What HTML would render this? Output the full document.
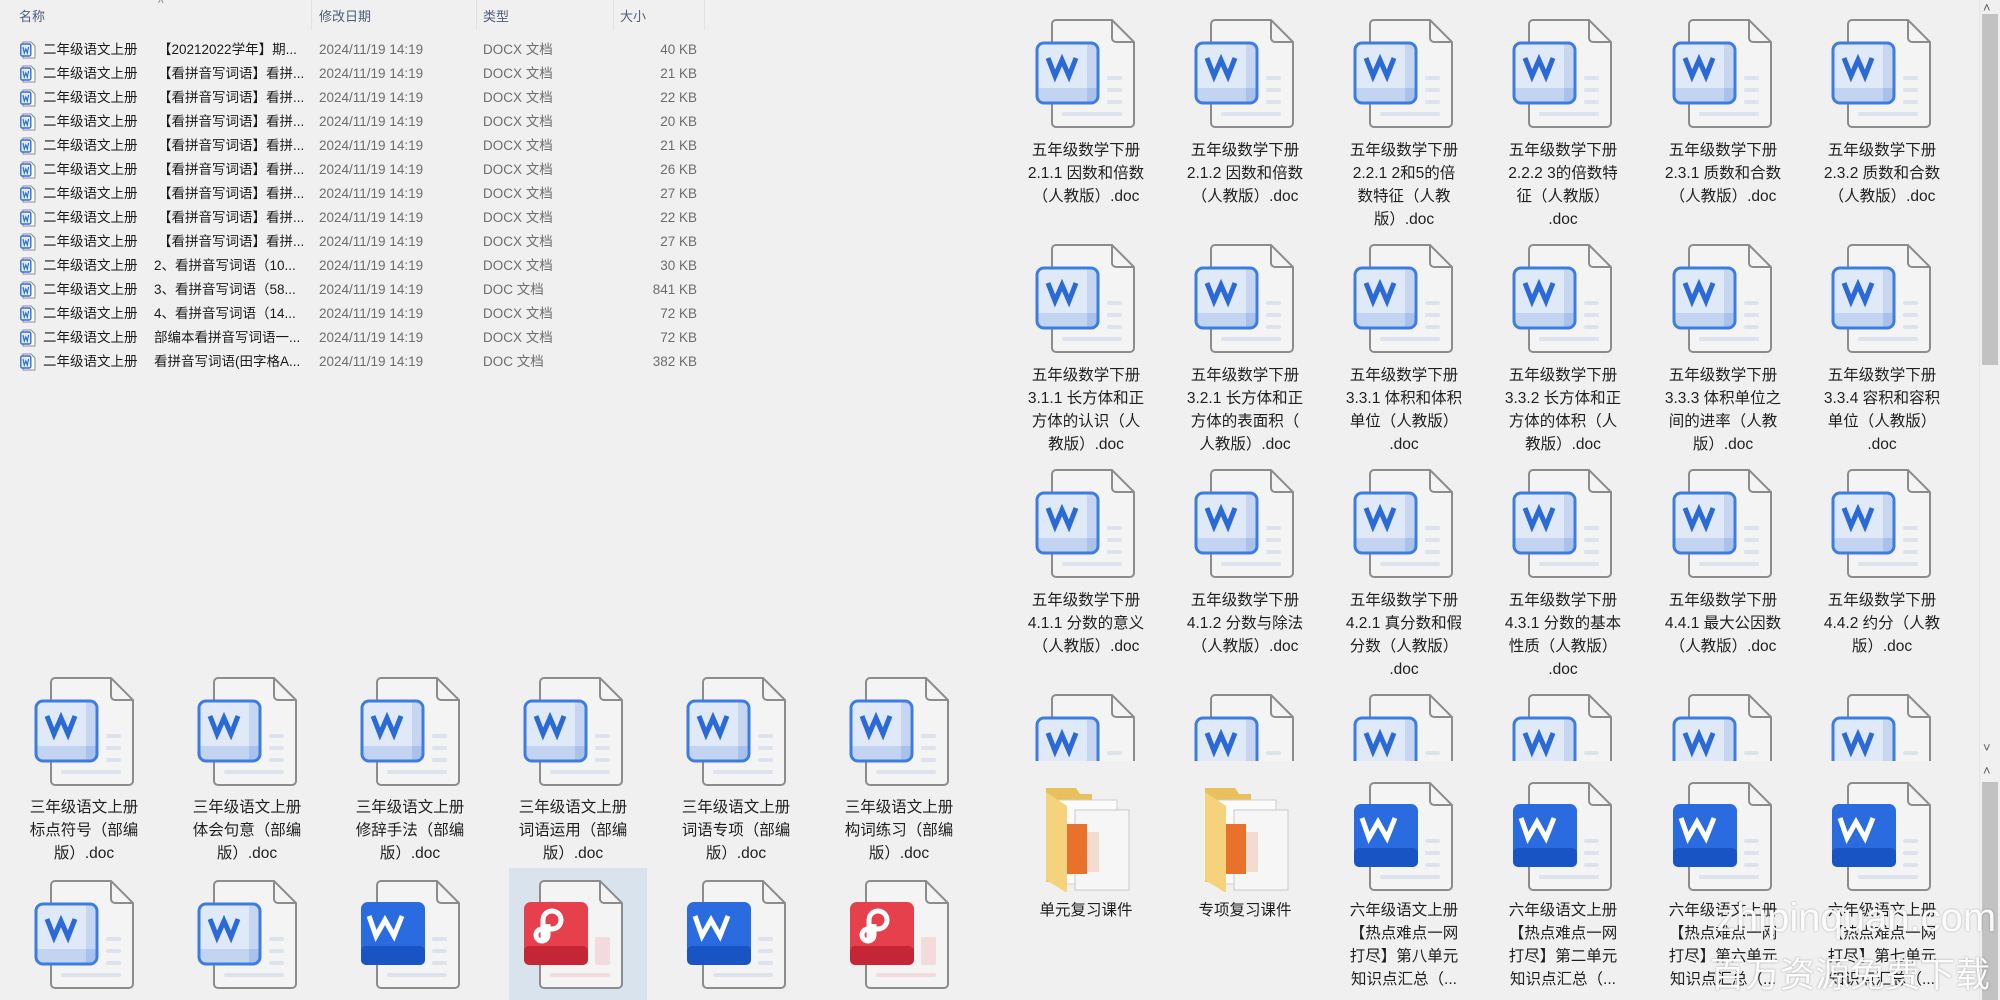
<!DOCTYPE html>
<html><head><meta charset="utf-8">
<style>
*{margin:0;padding:0;box-sizing:border-box}
body{width:2000px;height:1000px;overflow:hidden;background:#f0f0f0;position:relative;font-family:"Liberation Sans","Noto Sans CJK SC",sans-serif;color:#1a1a1a}
.a{position:absolute}
.hd{position:absolute;top:6px;font-size:13px;color:#4d6079}
.sep{position:absolute;top:0;width:1px;height:30px;background:#e2e2e2}
.row{position:absolute;left:0;width:720px;height:24px;font-size:13.5px;line-height:24px;white-space:nowrap}
.row span{position:absolute}
.n1{left:43px}.n2{left:154px}.dt{left:319px;color:#6d6d6d}.ty{left:483px;color:#6d6d6d}.sz{right:23px;color:#6d6d6d}
.li{position:absolute;left:20px;top:3px}
.ic{position:absolute;width:120px;height:112px;overflow:hidden}
.lbl{position:absolute;width:160px;text-align:center;font-size:15.5px;line-height:23px;color:#1f1f1f;white-space:nowrap}
</style></head><body>
<svg width="0" height="0" style="position:absolute">
<defs>
<g id="pg">
<path d="M1 5a4 4 0 0 1 4-4H61L83 23V104a4 4 0 0 1-4 4H5a4 4 0 0 1-4-4Z" fill="#f4f4f4" stroke="#8c8c8c" stroke-width="2"/>
<path d="M61 1V19a4 4 0 0 0 4 4H83" fill="none" stroke="#8c8c8c" stroke-width="2"/>
</g>
<symbol id="wo" viewBox="-20 -2 120 112">
<use href="#pg"/>
<rect x="56" y="57" width="15" height="4" rx="2" fill="#dde3ec"/>
<rect x="56" y="69" width="15" height="4" rx="2" fill="#dde3ec"/>
<rect x="56" y="81" width="15" height="4" rx="2" fill="#dde3ec"/>
<rect x="11" y="93" width="60" height="4" rx="2" fill="#dde3ec"/>
<rect x="-14" y="24" width="61" height="60" rx="7" fill="#e0e9f8"/>
<rect x="36" y="25" width="10" height="58" fill="#c6d6f1"/>
<rect x="-13" y="69" width="59" height="14" fill="#c3d4f0"/>
<rect x="36" y="69" width="10" height="14" fill="#a9c2ec"/>
<rect x="-14" y="24" width="61" height="60" rx="7" fill="none" stroke="#3d7ce0" stroke-width="3"/>
<path d="M-3 39L4 57L11 41L18 57L25 39" fill="none" stroke="#2b6ad6" stroke-width="5" stroke-linejoin="miter"/>
</symbol>
<symbol id="ws" viewBox="-20 -2 120 112">
<use href="#pg"/>
<rect x="56" y="57" width="15" height="4" rx="2" fill="#dde3ec"/>
<rect x="56" y="69" width="15" height="4" rx="2" fill="#dde3ec"/>
<rect x="56" y="81" width="15" height="4" rx="2" fill="#dde3ec"/>
<rect x="11" y="93" width="60" height="4" rx="2" fill="#dde3ec"/>
<rect x="-15" y="22" width="64" height="63" rx="7" fill="#2a6be0"/>
<rect x="-15" y="66" width="64" height="19" rx="5" fill="#1854c4"/>
<path d="M-7 36L0 56L9 40L18 56L26 36" fill="none" stroke="#fff" stroke-width="5"/>
</symbol>
<symbol id="pd" viewBox="-20 -2 120 112">
<use href="#pg"/>
<rect x="56" y="57" width="15" height="26" rx="2" fill="#f2dadd"/>
<rect x="56" y="81" width="15" height="4" rx="2" fill="#f2dadd"/>
<rect x="11" y="93" width="60" height="4" rx="2" fill="#f2dadd"/>
<rect x="-15" y="22" width="64" height="63" rx="7" fill="#e5404c"/>
<rect x="-15" y="66" width="64" height="19" rx="5" fill="#c42635"/>
<path d="M4 60V40a9 9 0 1 1 9 9H3a6 6 0 1 0 6 6V44" fill="none" stroke="#fff" stroke-width="5"/>
</symbol>
<symbol id="fd" viewBox="-20 -2 120 112">
<path d="M-5 6h30l4 6h12v88h-46z" fill="#e8c15c"/>
<rect x="8" y="18" width="58" height="84" fill="#fbfbfb" stroke="#cfcfcf"/>
<rect x="24" y="28" width="54" height="80" fill="#f6f6f6" stroke="#c8c8c8"/>
<rect x="14" y="42" width="22" height="50" fill="#e8712b"/>
<rect x="36" y="50" width="12" height="40" fill="#f1dccf"/>
<path d="M-5 10L16 24V111L-5 98Z" fill="#f4d37c"/>
</symbol>
<symbol id="sm" viewBox="0 0 16 18">
<path d="M3 1h8l4 4v12H3z" fill="#fff" stroke="#8a8a8a"/>
<rect x="0.8" y="3" width="10" height="12" rx="1.5" fill="#e4ecfa" stroke="#2f6fdb" stroke-width="1.4"/>
<path d="M3 6l1.3 6 1.5-4 1.5 4 1.3-6" fill="none" stroke="#2f6fdb" stroke-width="1.2"/>
</symbol>
</defs></svg>

<div class="a" style="left:158px;top:-4px;font-size:12px;color:#888">^</div>
<div class="hd" style="left:19px">名称</div>
<div class="hd" style="left:319px">修改日期</div>
<div class="hd" style="left:483px">类型</div>
<div class="hd" style="left:620px">大小</div>
<div class="sep" style="left:311px"></div><div class="sep" style="left:476px"></div><div class="sep" style="left:613px"></div><div class="sep" style="left:704px"></div>

<div class="row" style="top:38px"><svg class="li" width="16" height="18"><use href="#sm"/></svg><span class="n1">二年级语文上册</span><span class="n2" style="left:158px">【20212022学年】期...</span><span class="dt">2024/11/19 14:19</span><span class="ty">DOCX 文档</span><span class="sz">40 KB</span></div>
<div class="row" style="top:62px"><svg class="li" width="16" height="18"><use href="#sm"/></svg><span class="n1">二年级语文上册</span><span class="n2" style="left:158px">【看拼音写词语】看拼...</span><span class="dt">2024/11/19 14:19</span><span class="ty">DOCX 文档</span><span class="sz">21 KB</span></div>
<div class="row" style="top:86px"><svg class="li" width="16" height="18"><use href="#sm"/></svg><span class="n1">二年级语文上册</span><span class="n2" style="left:158px">【看拼音写词语】看拼...</span><span class="dt">2024/11/19 14:19</span><span class="ty">DOCX 文档</span><span class="sz">22 KB</span></div>
<div class="row" style="top:110px"><svg class="li" width="16" height="18"><use href="#sm"/></svg><span class="n1">二年级语文上册</span><span class="n2" style="left:158px">【看拼音写词语】看拼...</span><span class="dt">2024/11/19 14:19</span><span class="ty">DOCX 文档</span><span class="sz">20 KB</span></div>
<div class="row" style="top:134px"><svg class="li" width="16" height="18"><use href="#sm"/></svg><span class="n1">二年级语文上册</span><span class="n2" style="left:158px">【看拼音写词语】看拼...</span><span class="dt">2024/11/19 14:19</span><span class="ty">DOCX 文档</span><span class="sz">21 KB</span></div>
<div class="row" style="top:158px"><svg class="li" width="16" height="18"><use href="#sm"/></svg><span class="n1">二年级语文上册</span><span class="n2" style="left:158px">【看拼音写词语】看拼...</span><span class="dt">2024/11/19 14:19</span><span class="ty">DOCX 文档</span><span class="sz">26 KB</span></div>
<div class="row" style="top:182px"><svg class="li" width="16" height="18"><use href="#sm"/></svg><span class="n1">二年级语文上册</span><span class="n2" style="left:158px">【看拼音写词语】看拼...</span><span class="dt">2024/11/19 14:19</span><span class="ty">DOCX 文档</span><span class="sz">27 KB</span></div>
<div class="row" style="top:206px"><svg class="li" width="16" height="18"><use href="#sm"/></svg><span class="n1">二年级语文上册</span><span class="n2" style="left:158px">【看拼音写词语】看拼...</span><span class="dt">2024/11/19 14:19</span><span class="ty">DOCX 文档</span><span class="sz">22 KB</span></div>
<div class="row" style="top:230px"><svg class="li" width="16" height="18"><use href="#sm"/></svg><span class="n1">二年级语文上册</span><span class="n2" style="left:158px">【看拼音写词语】看拼...</span><span class="dt">2024/11/19 14:19</span><span class="ty">DOCX 文档</span><span class="sz">27 KB</span></div>
<div class="row" style="top:254px"><svg class="li" width="16" height="18"><use href="#sm"/></svg><span class="n1">二年级语文上册</span><span class="n2">2、看拼音写词语（10...</span><span class="dt">2024/11/19 14:19</span><span class="ty">DOCX 文档</span><span class="sz">30 KB</span></div>
<div class="row" style="top:278px"><svg class="li" width="16" height="18"><use href="#sm"/></svg><span class="n1">二年级语文上册</span><span class="n2">3、看拼音写词语（58...</span><span class="dt">2024/11/19 14:19</span><span class="ty">DOC 文档</span><span class="sz">841 KB</span></div>
<div class="row" style="top:302px"><svg class="li" width="16" height="18"><use href="#sm"/></svg><span class="n1">二年级语文上册</span><span class="n2">4、看拼音写词语（14...</span><span class="dt">2024/11/19 14:19</span><span class="ty">DOCX 文档</span><span class="sz">72 KB</span></div>
<div class="row" style="top:326px"><svg class="li" width="16" height="18"><use href="#sm"/></svg><span class="n1">二年级语文上册</span><span class="n2">部编本看拼音写词语一...</span><span class="dt">2024/11/19 14:19</span><span class="ty">DOCX 文档</span><span class="sz">72 KB</span></div>
<div class="row" style="top:350px"><svg class="li" width="16" height="18"><use href="#sm"/></svg><span class="n1">二年级语文上册</span><span class="n2">看拼音写词语(田字格A...</span><span class="dt">2024/11/19 14:19</span><span class="ty">DOC 文档</span><span class="sz">382 KB</span></div>

<div class="a" style="left:509px;top:868px;width:138px;height:132px;background:#d8e3ee"></div>
<svg class="ic" style="left:30px;top:675px"><use href="#wo"/></svg>
<svg class="ic" style="left:193px;top:675px"><use href="#wo"/></svg>
<svg class="ic" style="left:356px;top:675px"><use href="#wo"/></svg>
<svg class="ic" style="left:519px;top:675px"><use href="#wo"/></svg>
<svg class="ic" style="left:682px;top:675px"><use href="#wo"/></svg>
<svg class="ic" style="left:845px;top:675px"><use href="#wo"/></svg>
<div class="lbl" style="left:4px;top:796px">三年级语文上册<br>标点符号（部编<br>版）.doc</div>
<div class="lbl" style="left:167px;top:796px">三年级语文上册<br>体会句意（部编<br>版）.doc</div>
<div class="lbl" style="left:330px;top:796px">三年级语文上册<br>修辞手法（部编<br>版）.doc</div>
<div class="lbl" style="left:493px;top:796px">三年级语文上册<br>词语运用（部编<br>版）.doc</div>
<div class="lbl" style="left:656px;top:796px">三年级语文上册<br>词语专项（部编<br>版）.doc</div>
<div class="lbl" style="left:819px;top:796px">三年级语文上册<br>构词练习（部编<br>版）.doc</div>
<svg class="ic" style="left:30px;top:878px"><use href="#wo"/></svg>
<svg class="ic" style="left:193px;top:878px"><use href="#wo"/></svg>
<svg class="ic" style="left:356px;top:878px"><use href="#ws"/></svg>
<svg class="ic" style="left:519px;top:878px"><use href="#pd"/></svg>
<svg class="ic" style="left:682px;top:878px"><use href="#ws"/></svg>
<svg class="ic" style="left:845px;top:878px"><use href="#pd"/></svg>

<div class="a" style="left:1020px;top:0;width:959px;height:761px;overflow:hidden">
<svg class="ic" style="left:11px;top:17px"><use href="#wo"/></svg>
<svg class="ic" style="left:170px;top:17px"><use href="#wo"/></svg>
<svg class="ic" style="left:329px;top:17px"><use href="#wo"/></svg>
<svg class="ic" style="left:488px;top:17px"><use href="#wo"/></svg>
<svg class="ic" style="left:648px;top:17px"><use href="#wo"/></svg>
<svg class="ic" style="left:807px;top:17px"><use href="#wo"/></svg>
<div class="lbl" style="left:-14px;top:139px">五年级数学下册<br>2.1.1 因数和倍数<br>（人教版）.doc</div>
<div class="lbl" style="left:145px;top:139px">五年级数学下册<br>2.1.2 因数和倍数<br>（人教版）.doc</div>
<div class="lbl" style="left:304px;top:139px">五年级数学下册<br>2.2.1 2和5的倍<br>数特征（人教<br>版）.doc</div>
<div class="lbl" style="left:463px;top:139px">五年级数学下册<br>2.2.2 3的倍数特<br>征（人教版）<br>.doc</div>
<div class="lbl" style="left:623px;top:139px">五年级数学下册<br>2.3.1 质数和合数<br>（人教版）.doc</div>
<div class="lbl" style="left:782px;top:139px">五年级数学下册<br>2.3.2 质数和合数<br>（人教版）.doc</div>

<svg class="ic" style="left:11px;top:242px"><use href="#wo"/></svg>
<svg class="ic" style="left:170px;top:242px"><use href="#wo"/></svg>
<svg class="ic" style="left:329px;top:242px"><use href="#wo"/></svg>
<svg class="ic" style="left:488px;top:242px"><use href="#wo"/></svg>
<svg class="ic" style="left:648px;top:242px"><use href="#wo"/></svg>
<svg class="ic" style="left:807px;top:242px"><use href="#wo"/></svg>
<div class="lbl" style="left:-14px;top:364px">五年级数学下册<br>3.1.1 长方体和正<br>方体的认识（人<br>教版）.doc</div>
<div class="lbl" style="left:145px;top:364px">五年级数学下册<br>3.2.1 长方体和正<br>方体的表面积（<br>人教版）.doc</div>
<div class="lbl" style="left:304px;top:364px">五年级数学下册<br>3.3.1 体积和体积<br>单位（人教版）<br>.doc</div>
<div class="lbl" style="left:463px;top:364px">五年级数学下册<br>3.3.2 长方体和正<br>方体的体积（人<br>教版）.doc</div>
<div class="lbl" style="left:623px;top:364px">五年级数学下册<br>3.3.3 体积单位之<br>间的进率（人教<br>版）.doc</div>
<div class="lbl" style="left:782px;top:364px">五年级数学下册<br>3.3.4 容积和容积<br>单位（人教版）<br>.doc</div>

<svg class="ic" style="left:11px;top:467px"><use href="#wo"/></svg>
<svg class="ic" style="left:170px;top:467px"><use href="#wo"/></svg>
<svg class="ic" style="left:329px;top:467px"><use href="#wo"/></svg>
<svg class="ic" style="left:488px;top:467px"><use href="#wo"/></svg>
<svg class="ic" style="left:648px;top:467px"><use href="#wo"/></svg>
<svg class="ic" style="left:807px;top:467px"><use href="#wo"/></svg>
<div class="lbl" style="left:-14px;top:589px">五年级数学下册<br>4.1.1 分数的意义<br>（人教版）.doc</div>
<div class="lbl" style="left:145px;top:589px">五年级数学下册<br>4.1.2 分数与除法<br>（人教版）.doc</div>
<div class="lbl" style="left:304px;top:589px">五年级数学下册<br>4.2.1 真分数和假<br>分数（人教版）<br>.doc</div>
<div class="lbl" style="left:463px;top:589px">五年级数学下册<br>4.3.1 分数的基本<br>性质（人教版）<br>.doc</div>
<div class="lbl" style="left:623px;top:589px">五年级数学下册<br>4.4.1 最大公因数<br>（人教版）.doc</div>
<div class="lbl" style="left:782px;top:589px">五年级数学下册<br>4.4.2 约分（人教<br>版）.doc</div>

<svg class="ic" style="left:11px;top:692px"><use href="#wo"/></svg>
<svg class="ic" style="left:170px;top:692px"><use href="#wo"/></svg>
<svg class="ic" style="left:329px;top:692px"><use href="#wo"/></svg>
<svg class="ic" style="left:488px;top:692px"><use href="#wo"/></svg>
<svg class="ic" style="left:648px;top:692px"><use href="#wo"/></svg>
<svg class="ic" style="left:807px;top:692px"><use href="#wo"/></svg>
</div>

<svg class="ic" style="left:1031px;top:780px"><use href="#fd"/></svg>
<svg class="ic" style="left:1190px;top:780px"><use href="#fd"/></svg>
<svg class="ic" style="left:1349px;top:780px"><use href="#ws"/></svg>
<svg class="ic" style="left:1508px;top:780px"><use href="#ws"/></svg>
<svg class="ic" style="left:1668px;top:780px"><use href="#ws"/></svg>
<svg class="ic" style="left:1827px;top:780px"><use href="#ws"/></svg>
<div class="lbl" style="left:1006px;top:899px">单元复习课件</div>
<div class="lbl" style="left:1165px;top:899px">专项复习课件</div>
<div class="lbl" style="left:1324px;top:899px">六年级语文上册<br>【热点难点一网<br>打尽】第八单元<br>知识点汇总（...</div>
<div class="lbl" style="left:1483px;top:899px">六年级语文上册<br>【热点难点一网<br>打尽】第二单元<br>知识点汇总（...</div>
<div class="lbl" style="left:1643px;top:899px">六年级语文上册<br>【热点难点一网<br>打尽】第六单元<br>知识点汇总（...</div>
<div class="lbl" style="left:1802px;top:899px">六年级语文上册<br>【热点难点一网<br>打尽】第七单元<br>知识点汇总（...</div>

<div class="a" style="left:1979px;top:0;width:21px;height:761px;background:#f0f0f0;border-left:1px solid #e4e4e4"></div>
<div class="a" style="left:1982px;top:14px;width:16px;height:351px;background:#c2c2c2"></div>
<div class="a" style="left:1983px;top:0;font-size:13px;color:#606060">˄</div>
<div class="a" style="left:1983px;top:740px;font-size:13px;color:#606060">˅</div>
<div class="a" style="left:1979px;top:761px;width:21px;height:239px;background:#f0f0f0;border-left:1px solid #e4e4e4"></div>
<div class="a" style="left:1983px;top:763px;font-size:13px;color:#606060">˄</div>
<div class="a" style="left:1982px;top:782px;width:16px;height:218px;background:#c2c2c2"></div>

<div class="a" style="left:1716px;top:894px;font-size:40px;line-height:48px;white-space:nowrap;color:rgba(255,255,255,0.95);text-shadow:0 0 2px rgba(0,0,0,0.3);font-family:'Liberation Sans',sans-serif">zhipinquan.com</div>
<div class="a" style="left:1710px;top:952px;font-size:35px;line-height:42px;white-space:nowrap;color:rgba(255,255,255,0.97);text-shadow:0 0 2px rgba(0,0,0,0.35);font-family:'Noto Sans CJK SC',sans-serif">百万资源免费下载</div>
</body></html>
